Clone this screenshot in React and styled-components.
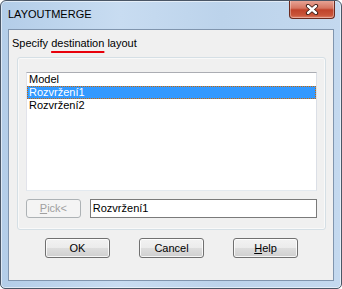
import React from "react";
import styled, { createGlobalStyle } from "styled-components";

const Global = createGlobalStyle`
  html, body { margin: 0; padding: 0; background: #ffffff; }
  body { font-family: "Liberation Sans", Arial, sans-serif; font-size: 11px; }
`;

const Window = styled.div`
  box-sizing: border-box;
  width: 342px;
  height: 289px;
  display: flex;
  flex-direction: column;
  border: 1px solid #4a5666;
  border-radius: 6px 6px 5px 5px;
  background: linear-gradient(to right, #b3cde8 0%, #c8dcf1 35%, #bcd3eb 65%, #c4d9ef 100%);
  box-shadow: inset 0 0 0 1px rgba(255, 255, 255, 0.55);
  overflow: hidden;
`;

const TitleBar = styled.div`
  display: flex;
  align-items: flex-start;
  height: 28px;
  padding-left: 7px;
  padding-right: 6px;
`;

const Title = styled.div`
  padding-top: 7px;
  font-size: 11px;
  line-height: 13px;
  color: #000;
`;

const CloseButton = styled.div`
  margin-left: auto;
  margin-top: -1px;
  box-sizing: border-box;
  width: 46px;
  height: 19px;
  border: 1px solid #6b2a1f;
  border-top: none;
  border-radius: 0 0 4px 4px;
  background: linear-gradient(to bottom, #e9a99b 0%, #d67561 45%, #c0432b 55%, #c9553a 85%, #e0826a 100%);
  box-shadow: inset 0 0 0 1px rgba(255, 255, 255, 0.35);
  display: flex;
  align-items: center;
  justify-content: center;
`;

const Client = styled.div`
  flex: 1;
  margin: 0 7px 7px 7px;
  border: 1px solid #8095ae;
  background: #f0f0f0;
  display: flex;
  flex-direction: column;
`;

const Prompt = styled.div`
  padding: 7px 0 0 3px;
  line-height: 13px;
  color: #000;
`;

const Marked = styled.span`
  text-decoration: underline;
  text-decoration-color: #e8000b;
  text-decoration-thickness: 2px;
  text-underline-offset: 4px;
`;

const GroupBox = styled.div`
  box-sizing: border-box;
  margin: 7px 7px 0 8px;
  width: 309px;
  height: 173px;
  border: 1px solid #d5dfe5;
  border-radius: 3px;
  box-shadow: inset 0 0 0 1px rgba(255, 255, 255, 0.6);
  padding: 14px 8px 0 8px;
  display: flex;
  flex-direction: column;
  gap: 8px;
`;

const ListBox = styled.div`
  box-sizing: border-box;
  height: 119px;
  width: 291px;
  background: #fff;
  border: 1px solid;
  border-color: #abadb3 #dbdfe6 #e3e9ef #e2e3ea;
  display: flex;
  flex-direction: column;
`;

const Item = styled.div`
  box-sizing: border-box;
  height: 13px;
  line-height: 11px;
  padding-left: 1px;
  border: 1px solid ${(p) => (p.$selected ? "#cc6600" : "transparent")};
  border-style: ${(p) => (p.$selected ? "dotted" : "solid")};
  background: ${(p) => (p.$selected ? "#3399ff" : "transparent")};
  color: ${(p) => (p.$selected ? "#fff" : "#000")};
  white-space: nowrap;
`;

const PickRow = styled.div`
  display: flex;
  align-items: flex-start;
  gap: 9px;
`;

const PickButton = styled.div`
  box-sizing: border-box;
  width: 55px;
  height: 19px;
  border: 1px solid #adb2b5;
  border-radius: 3px;
  background: #f4f4f4;
  color: #a0a0a0;
  display: flex;
  align-items: center;
  justify-content: center;
  line-height: 13px;
`;

const EditBox = styled.div`
  box-sizing: border-box;
  width: 228px;
  height: 19px;
  border: 1px solid #7a7a7a;
  background: #fff;
  line-height: 17px;
  padding-left: 2px;
  color: #000;
`;

const ButtonRow = styled.div`
  display: flex;
  justify-content: center;
  gap: 29px;
  margin-top: 8px;
  padding-left: 1px;
`;

const Button = styled.div`
  box-sizing: border-box;
  width: 65px;
  height: 20px;
  border: 1px solid #707070;
  border-radius: 3px;
  background: linear-gradient(to bottom, #f2f2f2 0%, #ebebeb 50%, #dddddd 51%, #cfcfcf 100%);
  box-shadow: inset 0 0 0 1px rgba(255, 255, 255, 0.8);
  display: flex;
  align-items: center;
  justify-content: center;
  line-height: 13px;
  color: #000;
`;

const Key = styled.span`
  text-decoration: underline;
  text-underline-offset: 1px;
`;

const CloseGlyph = () => (
  <svg width="14" height="11" viewBox="0 0 14 11">
    <path d="M3 2 L11 9 M11 2 L3 9" stroke="#3a1a14" strokeWidth="4.2" strokeLinecap="round" fill="none" />
    <path d="M3 2 L11 9 M11 2 L3 9" stroke="#ffffff" strokeWidth="2.4" strokeLinecap="round" fill="none" />
  </svg>
);

const items = ["Model", "Rozvržení1", "Rozvržení2"];

export default function App() {
  return (
    <>
      <Global />
      <Window>
        <TitleBar>
          <Title>LAYOUTMERGE</Title>
          <CloseButton>
            <CloseGlyph />
          </CloseButton>
        </TitleBar>
        <Client>
          <Prompt>
            Specify <Marked>destination</Marked> layout
          </Prompt>
          <GroupBox>
            <ListBox>
              {items.map((it) => (
                <Item key={it} $selected={it === "Rozvržení1"}>
                  {it}
                </Item>
              ))}
            </ListBox>
            <PickRow>
              <PickButton>
                <span>
                  <Key>P</Key>ick&lt;
                </span>
              </PickButton>
              <EditBox>Rozvržení1</EditBox>
            </PickRow>
          </GroupBox>
          <ButtonRow>
            <Button>OK</Button>
            <Button>Cancel</Button>
            <Button>
              <span>
                <Key>H</Key>elp
              </span>
            </Button>
          </ButtonRow>
        </Client>
      </Window>
    </>
  );
}
